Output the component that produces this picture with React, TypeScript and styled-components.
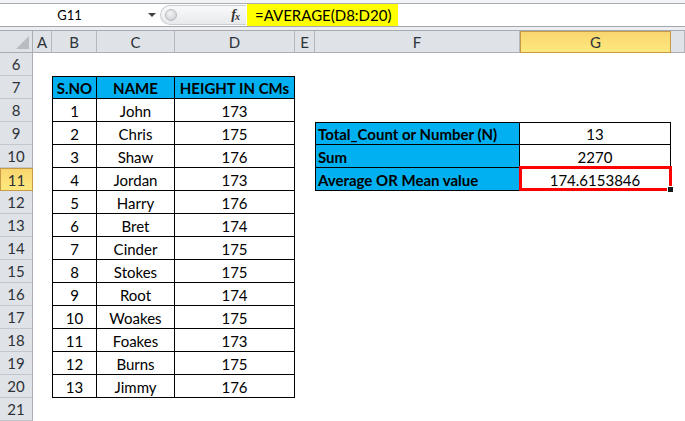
import React from 'react';
import styled, { createGlobalStyle, css } from 'styled-components';

const Global = createGlobalStyle`
  html, body { margin: 0; padding: 0; background: #fff; }
  body {
    width: 685px; height: 421px; overflow: hidden;
    font-family: Lato, "Liberation Sans", sans-serif;
  }
`;

type Variant = 'th' | 'td' | 'lbl' | 'val';
type CellData = { t: string; v: Variant };

const COLS = ['A', 'B', 'C', 'D', 'E', 'F', 'G', 'H'];
const ROWS = Array.from({ length: 16 }, (_, i) => i + 6);

const players: [string, string][] = [
  ['John', '173'], ['Chris', '175'], ['Shaw', '176'], ['Jordan', '173'],
  ['Harry', '176'], ['Bret', '174'], ['Cinder', '175'], ['Stokes', '175'],
  ['Root', '174'], ['Woakes', '175'], ['Foakes', '173'], ['Burns', '175'],
  ['Jimmy', '176'],
];

const sheet: Record<string, CellData> = {
  B7: { t: 'S.NO', v: 'th' },
  C7: { t: 'NAME', v: 'th' },
  D7: { t: 'HEIGHT IN CMs', v: 'th' },
  F9: { t: 'Total_Count or Number (N)', v: 'lbl' },
  G9: { t: '13', v: 'val' },
  F10: { t: 'Sum', v: 'lbl' },
  G10: { t: '2270', v: 'val' },
  F11: { t: 'Average OR Mean value', v: 'lbl' },
  G11: { t: '174.6153846', v: 'val' },
};
players.forEach(([name, h], i) => {
  const r = 8 + i;
  sheet[`B${r}`] = { t: String(i + 1), v: 'td' };
  sheet[`C${r}`] = { t: name, v: 'td' };
  sheet[`D${r}`] = { t: h, v: 'td' };
});

const ACTIVE_COL = 'G';
const ACTIVE_ROW = 11;

/* ---------- top chrome ---------- */

const TopBand = styled.div`
  height: 3px;
  background: #f2f3f5;
  border-bottom: 1px solid #a9aeb4;
`;

const FormulaBar = styled.div`
  height: 22px;
  display: flex;
  align-items: stretch;
  background: #fff;
  border-bottom: 1px solid #a3a7ac;
`;

const NameBox = styled.div`
  width: 145px;
  display: flex;
  align-items: center;
  justify-content: center;
  font-size: 13px;
  color: #000;
  padding-right: 6px;
  box-sizing: border-box;
`;

const DropArrow = styled.div`
  width: 15px;
  display: flex;
  align-items: center;
  justify-content: flex-start;
  &::before {
    content: '';
    margin-left: 3px;
    border-left: 4px solid transparent;
    border-right: 4px solid transparent;
    border-top: 4px solid #444;
  }
`;

const Splitter = styled.div`
  width: 86px;
  display: flex;
  align-items: center;
  justify-content: space-between;
  box-sizing: border-box;
  margin: 1px 0;
  border-radius: 11px 0 0 11px;
  border: 1px solid #c9ccd0;
  border-right: none;
  background: linear-gradient(#fafafa, #e7e9ec);
  padding: 0 7px 0 4px;
`;

const Knob = styled.div`
  width: 10px;
  height: 10px;
  border-radius: 50%;
  background: radial-gradient(circle at 40% 35%, #f4f4f4, #c5c8cc);
  border: 1px solid #b9bcc0;
`;

const Fx = styled.span`
  font-family: "Liberation Serif", serif;
  font-style: italic;
  font-weight: 700;
  font-size: 14px;
  color: #333;
  letter-spacing: -1px;
  & > sub {
    font-size: 10px;
    vertical-align: -1px;
  }
`;

const FormulaText = styled.div`
  margin-left: 1px;
  padding: 0 7px 0 8px;
  display: flex;
  align-items: center;
  background: #ffff00;
  font-size: 15px;
  color: #000;
`;

const Gap = styled.div`
  height: 3px;
  background: #eceef1;
  border-bottom: 1px solid #a6abb1;
`;

/* ---------- grid ---------- */

const Grid = styled.div`
  display: grid;
  grid-template-columns: 33px 19px 45px 78px 120px 20px 205px 151px 1fr;
  grid-template-rows: 22px repeat(16, 23px);
`;

const Corner = styled.div`
  position: relative;
  background: #dfe2e6;
  border-right: 1px solid #a9aeb4;
  border-bottom: 1px solid #a9aeb4;
  box-sizing: border-box;
  &::after {
    content: '';
    position: absolute;
    right: 3px;
    bottom: 3px;
    border-left: 13px solid transparent;
    border-bottom: 13px solid #b9bdc2;
  }
`;

const headActive = css`
  background: linear-gradient(#f9d66f, #fee97e);
  border-color: #c99a45;
`;

const ColHead = styled.div<{ $active?: boolean }>`
  display: flex;
  align-items: center;
  justify-content: center;
  background: #dfe2e6;
  border-right: 1px solid #b3b8be;
  border-bottom: 1px solid #a9aeb4;
  box-sizing: border-box;
  font-size: 15px;
  color: #2d3339;
  ${p => p.$active && css`
    ${headActive};
    border: 1px solid #c99a45;
  `}
`;

const RowHead = styled.div<{ $active?: boolean }>`
  display: flex;
  align-items: center;
  justify-content: center;
  background: #dfe2e6;
  border-right: 1px solid #a9aeb4;
  border-bottom: 1px solid #c3c7cc;
  box-sizing: border-box;
  font-size: 15px;
  color: #2d3339;
  ${p => p.$active && css`
    ${headActive};
    border: 1px solid #c99a45;
  `}
`;

const Cell = styled.div<{ $v?: Variant; $top?: boolean; $left?: boolean }>`
  position: relative;
  display: flex;
  align-items: center;
  justify-content: center;
  box-sizing: border-box;
  font-size: 15px;
  color: #000;
  white-space: nowrap;
  padding-top: 1px;
  ${p => p.$v && css`
    border-right: 1px solid #000;
    border-bottom: 1px solid #000;
  `}
  ${p => p.$top && css`border-top: 1px solid #000;`}
  ${p => p.$left && css`border-left: 1px solid #000;`}
  ${p => (p.$v === 'th' || p.$v === 'lbl') && css`
    background: #00b0f0;
    font-weight: 700;
  `}
  ${p => p.$v === 'lbl' && css`
    justify-content: flex-start;
    padding-left: 2px;
  `}
`;

const Selection = styled.div`
  position: absolute;
  top: -2px;
  left: -1px;
  right: -2px;
  bottom: -1px;
  border: 3px solid #ff0000;
  pointer-events: none;
  &::after {
    content: '';
    position: absolute;
    right: -4px;
    bottom: -4px;
    width: 5px;
    height: 5px;
    background: #1a1a1a;
    border: 1px solid #fff;
    border-right: none;
    border-bottom: none;
  }
`;

export default function App() {
  return (
    <>
      <Global />
      <TopBand />
      <FormulaBar>
        <NameBox>G11</NameBox>
        <DropArrow />
        <Splitter>
          <Knob />
          <Fx>
            f<sub>x</sub>
          </Fx>
        </Splitter>
        <FormulaText>=AVERAGE(D8:D20)</FormulaText>
      </FormulaBar>
      <Gap />
      <Grid>
        <Corner />
        {COLS.map(c => (
          <ColHead key={c} $active={c === ACTIVE_COL}>
            {c === 'H' ? '' : c}
          </ColHead>
        ))}
        {ROWS.map(r => (
          <React.Fragment key={r}>
            <RowHead $active={r === ACTIVE_ROW}>{r}</RowHead>
            {COLS.map(c => {
              const d = sheet[`${c}${r}`];
              const inMain = ['B', 'C', 'D'].includes(c);
              return (
                <Cell
                  key={c}
                  $v={d?.v}
                  $top={!!d && ((inMain && r === 7) || (!inMain && r === 9))}
                  $left={!!d && (c === 'B' || c === 'F')}
                >
                  {d?.t}
                  {c === ACTIVE_COL && r === ACTIVE_ROW && <Selection />}
                </Cell>
              );
            })}
          </React.Fragment>
        ))}
      </Grid>
    </>
  );
}
